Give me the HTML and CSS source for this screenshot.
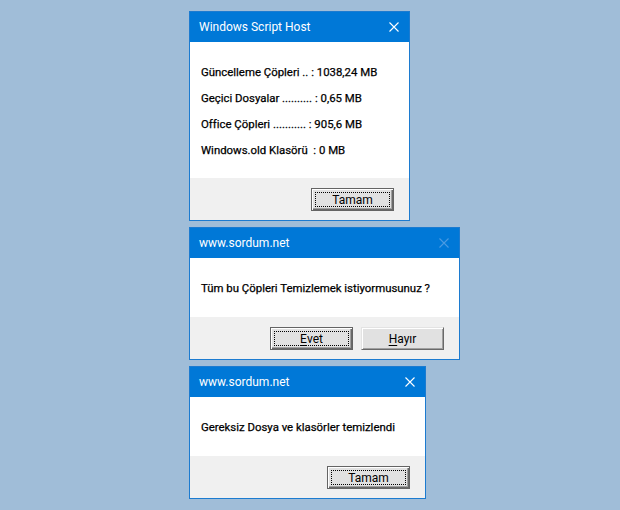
FILE: index.html
```html
<!DOCTYPE html>
<html lang="tr">
<head>
<meta charset="utf-8">
<title>Dialogs</title>
<link rel="stylesheet" href="styles.css">
</head>
<body>
<div class="stack">
  <section class="dialog d1">
    <header class="titlebar">
      <span class="title">Windows Script Host</span>
      <svg class="close" width="10" height="10" viewBox="0 0 10 10"><path d="M0.5 0.5L9.5 9.5M9.5 0.5L0.5 9.5" stroke="#fff" stroke-width="1.1" fill="none"/></svg>
    </header>
    <div class="content lines">
      <p>Güncelleme Çöpleri .. : 1038,24 MB</p>
      <p>Geçici Dosyalar .......... : 0,65 MB</p>
      <p>Office Çöpleri ........... : 905,6 MB</p>
      <p>Windows.old Klasörü&nbsp; : 0 MB</p>
    </div>
    <footer class="footer">
      <button class="btn default"><span class="focus">Tamam</span></button>
    </footer>
  </section>

  <section class="dialog d2">
    <header class="titlebar">
      <span class="title">www.sordum.net</span>
      <svg class="close" width="10" height="10" viewBox="0 0 10 10"><path d="M0.5 0.5L9.5 9.5M9.5 0.5L0.5 9.5" stroke="#4b9be2" stroke-width="1.1" fill="none"/></svg>
    </header>
    <div class="content">
      <p>Tüm bu Çöpleri Temizlemek istiyormusunuz ?</p>
    </div>
    <footer class="footer">
      <button class="btn default"><span class="focus"><u>E</u>vet</span></button>
      <button class="btn"><span class="nofocus"><u>H</u>ayır</span></button>
    </footer>
  </section>

  <section class="dialog d3">
    <header class="titlebar">
      <span class="title">www.sordum.net</span>
      <svg class="close" width="10" height="10" viewBox="0 0 10 10"><path d="M0.5 0.5L9.5 9.5M9.5 0.5L0.5 9.5" stroke="#fff" stroke-width="1.1" fill="none"/></svg>
    </header>
    <div class="content">
      <p>Gereksiz Dosya ve klasörler temizlendi</p>
    </div>
    <footer class="footer">
      <button class="btn default"><span class="focus">Tamam</span></button>
    </footer>
  </section>
</div>
</body>
</html>
```
FILE: styles.css
```css
* { box-sizing: border-box; }
html, body { margin: 0; padding: 0; }
body {
  background: #a0bdd8;
  width: 620px;
  height: 510px;
  overflow: hidden;
  font-family: Roboto, "Noto Sans", sans-serif;
  font-size: 12px;
  color: #000;
}
.stack {
  display: flex;
  flex-direction: column;
  align-items: flex-start;
  gap: 6px;
  padding: 11px 0 0 189px;
}
.dialog {
  border: 1px solid #1c7bd0;
  background: #fff;
}
.d1 { width: 221px; }
.d2 { width: 271px; }
.d3 { width: 237px; }
.titlebar {
  height: 30px;
  background: #0078d7;
  display: flex;
  align-items: center;
  justify-content: space-between;
  padding: 0 10px 0 9px;
  color: #fff;
}
.title { font-size: 12px; line-height: 16px; }
.close { display: block; }
.content {
  padding: 22px 11px 21px 11px;
  display: flex;
  flex-direction: column;
  gap: 10px;
}
.content.lines { padding-bottom: 20px; }
.content p {
  margin: 0;
  font-size: 11.4px;
  line-height: 16px;
  white-space: nowrap;
  -webkit-text-stroke: 0.25px #000;
}
.footer {
  height: 42px;
  background: #f0f0f0;
  display: flex;
  justify-content: flex-end;
  align-items: flex-start;
  gap: 8px;
  padding: 10px 15px 0 0;
}
.btn {
  width: 83px;
  height: 23px;
  padding: 0;
  margin: 0;
  font: inherit;
  font-size: 12px;
  color: #000;
  background: #e1e1e1;
  border: 1px solid;
  border-color: #e3e3e3 #696969 #696969 #e3e3e3;
  box-shadow: inset 1px 1px 0 #fff, inset -1px -1px 0 #a0a0a0;
  display: flex;
  align-items: stretch;
  justify-content: stretch;
}
.btn.default {
  border: 1px solid #646464;
  box-shadow: inset 1px 1px 0 #fff, inset -1px -1px 0 #696969, inset -2px -2px 0 #a0a0a0;
}
.btn .focus, .btn .nofocus {
  flex: 1;
  display: flex;
  align-items: center;
  justify-content: center;
  line-height: 14px;
}
.btn .focus {
  margin: 3px;
  border: 1px dotted #000;
}
.btn u { text-decoration: underline; text-underline-offset: 2px; }
```
